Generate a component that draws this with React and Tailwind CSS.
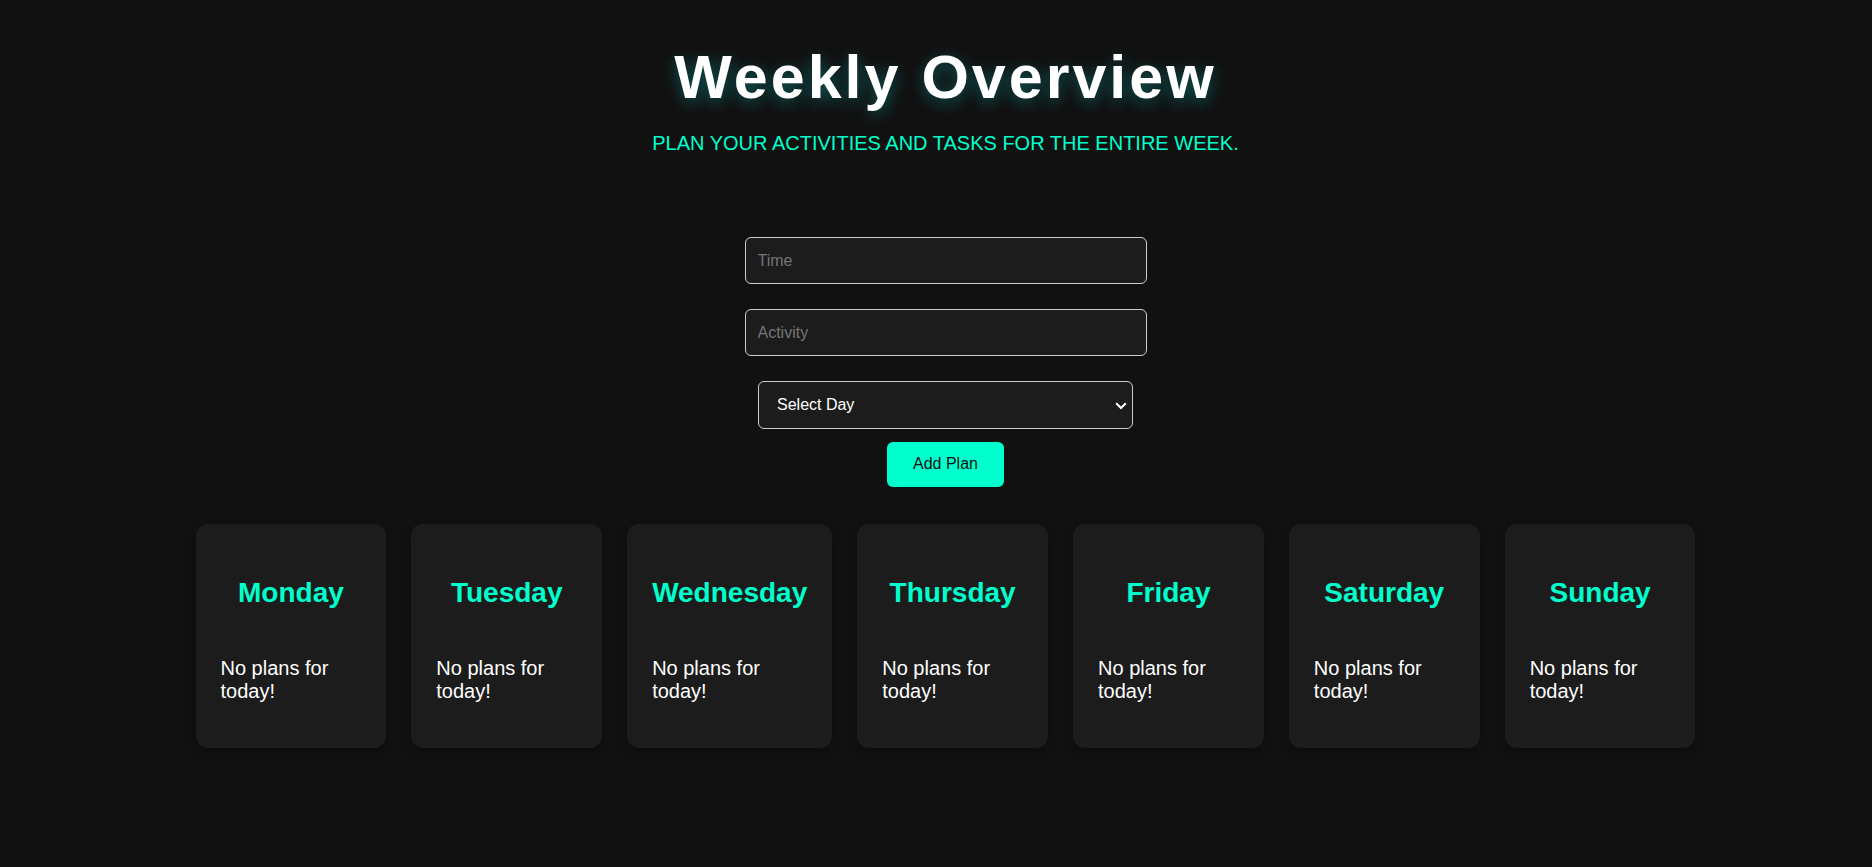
import { useState } from "react";

const DAYS = ["Monday", "Tuesday", "Wednesday", "Thursday", "Friday", "Saturday", "Sunday"];

const FIELD =
  "block rounded-md border border-[#cccccc] bg-[#1c1c1c] text-base text-white outline-none";

export default function App() {
  const [time, setTime] = useState("");
  const [activity, setActivity] = useState("");
  const [day, setDay] = useState("");
  const [plans, setPlans] = useState({});

  const addPlan = (event) => {
    event.preventDefault();
    if (!time || !activity || !day) return;
    setPlans((all) => ({ ...all, [day]: [...(all[day] || []), `${time} - ${activity}`] }));
    setTime("");
    setActivity("");
    setDay("");
  };

  return (
    <main className="flex min-h-screen flex-col items-center bg-[#111111] pt-10 pr-[21px] pb-10 pl-10 font-['Liberation_Sans',Arial,sans-serif] text-white">
      <header className="text-center">
        <h1 className="text-[61px] leading-[74px] font-bold tracking-[3px] [text-shadow:0_4px_15px_rgba(0,255,255,0.3)]">
          Weekly Overview
        </h1>
        <p className="mt-[17px] text-xl leading-6 text-[#00ffcc] uppercase">
          Plan your activities and tasks for the entire week.
        </p>
      </header>

      <form onSubmit={addPlan} className="mt-[82px] flex w-full max-w-[402px] flex-col items-center">
        <input
          type="text"
          aria-label="Time"
          placeholder="Time"
          value={time}
          onChange={(e) => setTime(e.target.value)}
          className={`${FIELD} h-[47px] w-full px-3 placeholder:text-[#757575]`}
        />
        <input
          type="text"
          aria-label="Activity"
          placeholder="Activity"
          value={activity}
          onChange={(e) => setActivity(e.target.value)}
          className={`${FIELD} mt-[25px] h-[47px] w-full px-3 placeholder:text-[#757575]`}
        />
        <div className="relative mt-[25px] w-[375px] max-w-full">
          <select
            aria-label="Day"
            value={day}
            onChange={(e) => setDay(e.target.value)}
            className={`${FIELD} h-12 w-full appearance-none pr-8 pl-[18px]`}
          >
            <option value="">Select Day</option>
            {DAYS.map((name) => (
              <option key={name} value={name}>
                {name}
              </option>
            ))}
          </select>
          <svg
            viewBox="0 0 12 8"
            aria-hidden="true"
            className="pointer-events-none absolute top-[21px] right-1.5 h-2 w-3 fill-none stroke-white stroke-2"
          >
            <path d="M1.2 1.2 6 6l4.8-4.8" />
          </svg>
        </div>
        <button
          type="submit"
          className="mt-[13px] cursor-pointer rounded-md bg-[#00ffcc] px-[26px] pt-2.5 pb-[11px] text-base text-[#111111]"
        >
          Add Plan
        </button>
      </form>

      <section className="mt-[37px] grid w-full max-w-[1500px] grid-cols-[repeat(7,1fr)] gap-[25px]">
        {DAYS.map((name) => (
          <article
            key={name}
            className="rounded-xl bg-[#1c1c1c] px-[25px] pt-[53px] pb-[45px] shadow-[0_4px_10px_rgba(0,0,0,0.3)]"
          >
            <h2 className="text-center text-[28px] leading-8 font-bold text-[#00ffcc]">{name}</h2>
            <ul className="mt-12 text-xl leading-[23px]">
              {(plans[name] || ["No plans for today!"]).map((plan, i) => (
                <li key={i}>{plan}</li>
              ))}
            </ul>
          </article>
        ))}
      </section>
    </main>
  );
}
